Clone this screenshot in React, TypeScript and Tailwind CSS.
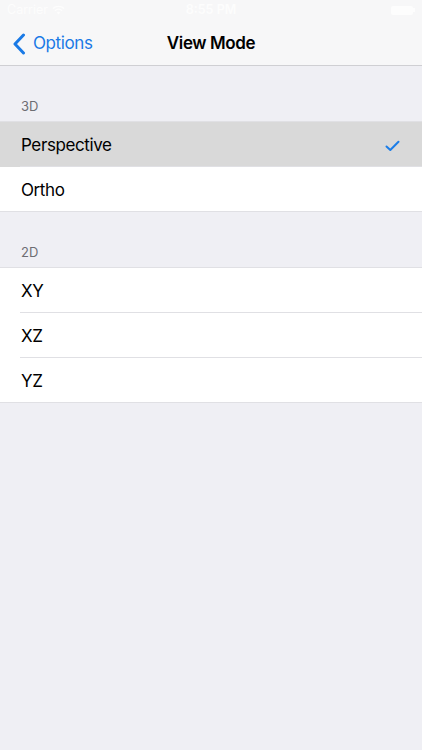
import React from "react";

function Row({ label, selected, last }: { label: string; selected?: boolean; last?: boolean }) {
  return (
    <div className={selected ? "bg-[#d9d9d9]" : "bg-white"}>
      <div className="flex h-[44px] items-center justify-between pl-[21px] pt-[3px]">
        <span className="text-[17px] tracking-[-0.4px] text-black">{label}</span>
        {selected ? (
          <svg width="15" height="12" viewBox="0 0 15 12" className="mr-[22px]">
            <path d="M1.5 6.5 L5.3 10 L13.5 1.8" fill="none" stroke="#1b7de8" strokeWidth="2" strokeLinecap="round" strokeLinejoin="round" />
          </svg>
        ) : null}
      </div>
      {!last ? <div className="ml-[20px] h-px bg-[#e0e0e4]" /> : null}
    </div>
  );
}

function SectionHeader({ title }: { title: string }) {
  return (
    <div className="flex h-[55px] items-end pb-[5px] pl-[21px]">
      <span className="text-[13px] text-[#6d6d72]">{title}</span>
    </div>
  );
}

export default function App() {
  return (
    <div
      className="flex min-h-[750px] w-full flex-col bg-[#efeff4]"
      style={{ fontFamily: "Inter, 'Liberation Sans', sans-serif" }}
    >
      <div className="border-b border-[#cfcfd3] bg-[#f7f7f8]">
        <div className="relative flex h-[20px] items-center justify-between px-[7px]">
          <div className="flex items-center gap-[4px] text-[12.5px] text-[#fdfdfd]">
            <span>Carrier</span>
            <svg width="13" height="10" viewBox="0 0 13 10">
              <path d="M1 3.6 A8 8 0 0 1 12 3.6" fill="none" stroke="#fdfdfd" strokeWidth="1.4" />
              <path d="M3 5.7 A5 5 0 0 1 10 5.7" fill="none" stroke="#fdfdfd" strokeWidth="1.4" />
              <path d="M6.5 9.5 L4.8 7.6 A2.5 2.5 0 0 1 8.2 7.6 Z" fill="#fdfdfd" />
            </svg>
          </div>
          <span className="absolute left-1/2 -translate-x-1/2 text-[12.5px] font-semibold text-[#fdfdfd]">8:55 PM</span>
          <div className="flex items-center">
            <div className="h-[9px] w-[22px] rounded-[2px] bg-[#fdfdfd]" />
            <div className="h-[4px] w-[2px] bg-[#fdfdfd]" />
          </div>
        </div>
        <div className="relative flex h-[45px] items-center pt-[2px]">
          <div className="flex items-center pl-[12px] text-[#1a7ae6]">
            <svg width="14" height="22" viewBox="0 0 14 22" className="mr-[7px]">
              <path d="M11.5 2 L3 11 L11.5 20" fill="none" stroke="#1a7ae6" strokeWidth="3" strokeLinecap="round" strokeLinejoin="round" />
            </svg>
            <span className="text-[17px] tracking-[-0.4px]">Options</span>
          </div>
          <span className="absolute left-1/2 -translate-x-1/2 text-[17px] font-semibold tracking-[-0.4px] text-black">View Mode</span>
        </div>
      </div>

      <SectionHeader title="3D" />
      <div className="border-y border-[#e0e0e4]">
        <Row label="Perspective" selected />
        <Row label="Ortho" last />
      </div>

      <SectionHeader title="2D" />
      <div className="border-y border-[#e0e0e4]">
        <Row label="XY" />
        <Row label="XZ" />
        <Row label="YZ" last />
      </div>
    </div>
  );
}
